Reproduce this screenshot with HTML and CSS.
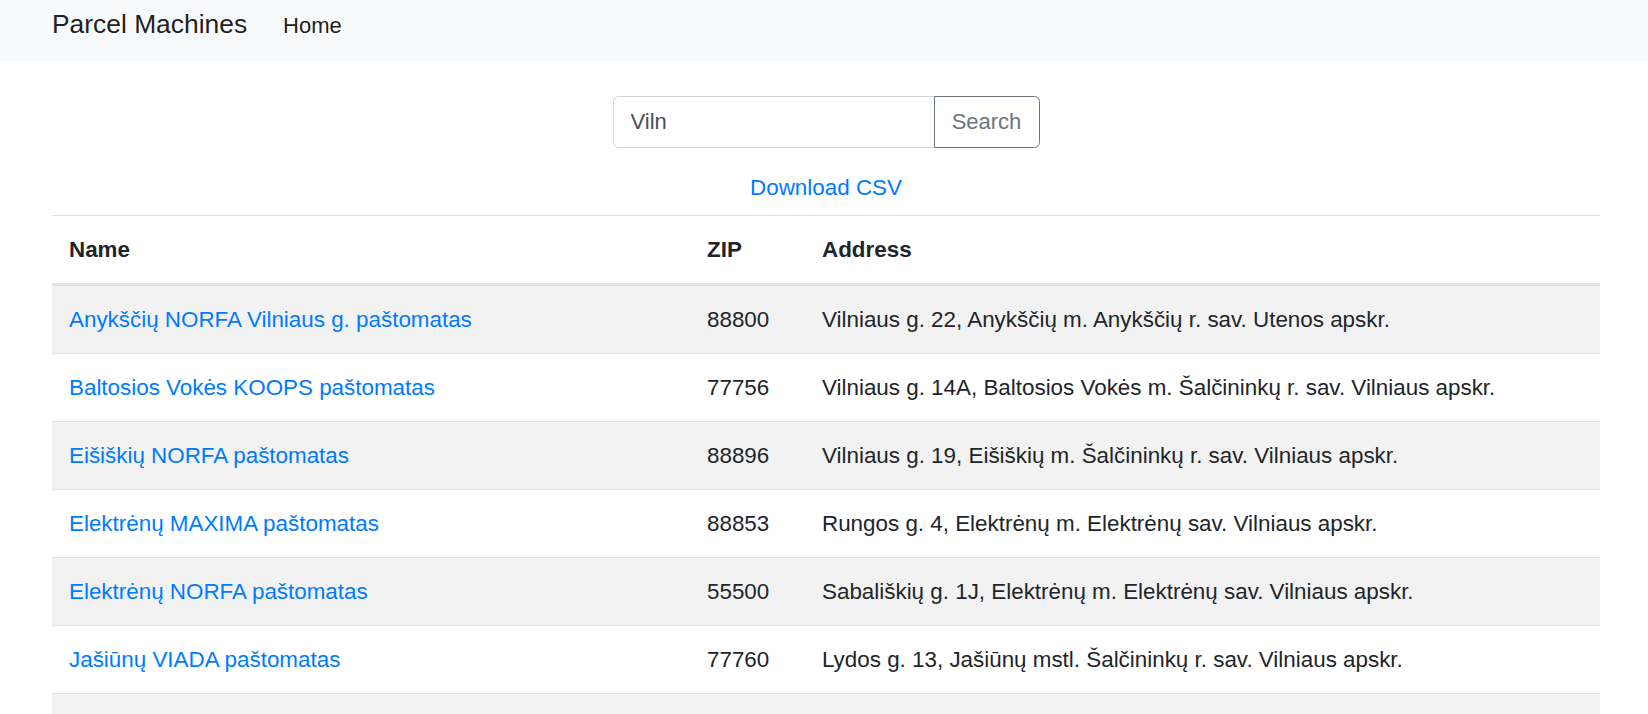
FILE: index.html
```html
<!DOCTYPE html>
<html lang="lt">
<head>
<meta charset="utf-8">
<title>Parcel Machines</title>
<link rel="stylesheet" href="styles.css">
</head>
<body>
<nav class="navbar">
  <a class="brand" href="#">Parcel Machines</a>
  <a class="nav-link" href="#">Home</a>
</nav>
<main class="container">
  <form class="search">
    <div class="input-group">
      <input class="search-input" type="text" value="Viln">
      <button class="search-btn" type="button">Search</button>
    </div>
  </form>
  <div class="download"><a href="#">Download CSV</a></div>
  <table class="table">
    <thead>
      <tr><th class="col-name">Name</th><th class="col-zip">ZIP</th><th>Address</th></tr>
    </thead>
    <tbody>
      <tr><td><a href="#">Anykščių NORFA Vilniaus g. paštomatas</a></td><td>88800</td><td>Vilniaus g. 22, Anykščių m. Anykščių r. sav. Utenos apskr.</td></tr>
      <tr><td><a href="#">Baltosios Vokės KOOPS paštomatas</a></td><td>77756</td><td>Vilniaus g. 14A, Baltosios Vokės m. Šalčininkų r. sav. Vilniaus apskr.</td></tr>
      <tr><td><a href="#">Eišiškių NORFA paštomatas</a></td><td>88896</td><td>Vilniaus g. 19, Eišiškių m. Šalčininkų r. sav. Vilniaus apskr.</td></tr>
      <tr><td><a href="#">Elektrėnų MAXIMA paštomatas</a></td><td>88853</td><td>Rungos g. 4, Elektrėnų m. Elektrėnų sav. Vilniaus apskr.</td></tr>
      <tr><td><a href="#">Elektrėnų NORFA paštomatas</a></td><td>55500</td><td>Sabališkių g. 1J, Elektrėnų m. Elektrėnų sav. Vilniaus apskr.</td></tr>
      <tr><td><a href="#">Jašiūnų VIADA paštomatas</a></td><td>77760</td><td>Lydos g. 13, Jašiūnų mstl. Šalčininkų r. sav. Vilniaus apskr.</td></tr>
      <tr class="empty-row"><td></td><td></td><td></td></tr>
    </tbody>
  </table>
</main>
</body>
</html>
```
FILE: styles.css
```css
* { box-sizing: border-box; }
html, body { margin: 0; padding: 0; }
body {
  font-family: "Liberation Sans", Arial, sans-serif;
  font-size: 22.4px;
  line-height: 33.6px;
  color: #212529;
  background: #fff;
}
a { color: #007bff; text-decoration: none; }

.navbar {
  display: flex;
  align-items: baseline;
  height: 62px;
  padding: 9px 52px 0;
  background: #f8f9fa;
}
.brand {
  font-size: 26.4px;
  line-height: 30px;
  color: rgba(0, 0, 0, 0.9);
  margin-right: 36px;
}
.nav-link {
  font-size: 22px;
  line-height: 30px;
  color: rgba(0, 0, 0, 0.9);
}

.container {
  margin-left: 52px;
  width: 1548px;
}
.search {
  display: flex;
  justify-content: center;
  padding-top: 34px;
}
.input-group {
  display: flex;
  height: 52px;
}
.search-input {
  width: 322px;
  height: 52px;
  padding: 0 17px;
  font-family: inherit;
  font-size: 22px;
  color: #495057;
  border: 1px solid #ced4da;
  border-radius: 5.6px 0 0 5.6px;
  background: #fff;
  outline: none;
}
.search-btn {
  width: 106px;
  height: 52px;
  margin-left: -1px;
  padding: 0;
  font-family: inherit;
  font-size: 22px;
  color: #6c757d;
  background: transparent;
  border: 1px solid #6c757d;
  border-radius: 0 5.6px 5.6px 0;
}
.download {
  text-align: center;
  margin-top: 23px;
  margin-bottom: 10px;
}

.table {
  width: 1548px;
  border-collapse: collapse;
  table-layout: fixed;
}
.table th, .table td {
  padding: 17px;
  line-height: 33px;
  text-align: left;
  vertical-align: top;
  border-top: 1px solid #dee2e6;
}
.table th {
  font-weight: bold;
  border-bottom: 3px solid #dee2e6;
}
.col-name { width: 638px; }
.col-zip { width: 115px; }
.table tbody tr:nth-child(odd) { background: #f2f2f2; }
.empty-row { height: 68px; }
```
